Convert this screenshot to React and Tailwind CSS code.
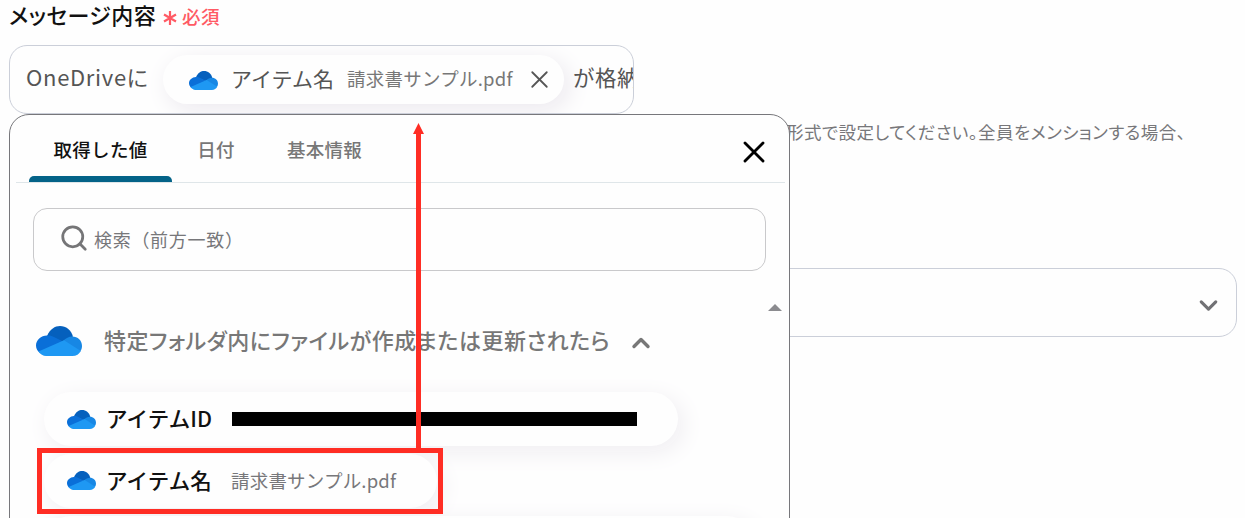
import React, { useState } from 'react';
import { ChevronDown, ChevronUp, Search, X } from 'lucide-react';

const tabs = [
  { id: 'values', label: '取得した値', className: 'ml-[13px] w-[143px]' },
  { id: 'date', label: '日付', className: 'w-[88px]' },
  { id: 'basic', label: '基本情報', className: 'w-[129px]' },
];

const OneDriveIcon = ({ className }) => (
  <svg viewBox="0 0 46 30" className={className}>
    <path d="M11 10C14 3 19 0 24 0c6 0 11 4 13 10.500L27 16z" fill="#0560bd" />
    <path d="M11 9.500c3-.3 5 .4 7 1.500L30 17 4 27C1.500 25 0 22.500 0 19.500 0 14 5 9.700 11 9.500z" fill="#0a6fd8" />
    <path d="M27 15c3-3 6-4.500 9-4.500 6 0 10 4 10 9.500 0 2-.6 4-1.800 5.500L23 17z" fill="#1787e4" />
    <path d="M2.500 25.500 28 14.200 44.800 25c-1.500 3-4.500 5-8.500 5H10c-3 0-5.500-1.700-7.500-4.500z" fill="#1e98f3" />
  </svg>
);

const Tabs = ({ active, onChange }) => (
  <div className="mr-1 ml-1.5 flex h-[68px] border-b border-[#dfe6e9]">
    {tabs.map((tab) => (
      <button
        key={tab.id}
        onClick={() => onChange(tab.id)}
        className={`flex flex-col items-center text-[18.500px] font-medium tracking-[0.3px] ${tab.className} ${
          active === tab.id ? 'text-[#111]' : 'text-[#777]'
        }`}
      >
        <span className="mt-5 h-7 leading-7 whitespace-nowrap">{tab.label}</span>
        {active === tab.id && <span className="mt-auto h-1.5 w-full rounded-t-[5px] bg-[#046388]" />}
      </button>
    ))}
    <button className="mt-[22px] mr-[16px] ml-auto h-[30px] w-[30px] text-black">
      <X className="h-full w-full scale-[1.2]" strokeWidth={1.900} />
    </button>
  </div>
);

const ValuePanel = () => {
  const [active, setActive] = useState('values');

  return (
    <div className="absolute top-[114px] left-[9px] h-[440px] w-[781px] rounded-t-[20px] border border-[#77777b] bg-[#fefefe]">
      <Tabs active={active} onChange={setActive} />

      {/* Search */}
      <div className="mx-[23px] mt-[25px] flex h-[63px] items-center rounded-[14px] border border-[#c9c9cb] pb-[2px] pl-[25px]">
        <Search className="-mt-px h-[30px] w-[30px] text-[#757577]" strokeWidth={2.200} />
        <span className="ml-[5px] text-lg tracking-[0.7px] text-[#77777a]">検索（前方一致）</span>
      </div>

      {/* Values of the trigger step */}
      <div className="flex">
        <div className="flex-1">
          <div className="mt-[50px] ml-[26px] flex h-10 items-center">
            <OneDriveIcon className="h-[30px] w-[46px]" />
            <span className="-mt-[3px] ml-[22px] text-[22px] font-medium tracking-[0.5px] whitespace-nowrap text-[#777] [font-feature-settings:'palt']">
              特定フォルダ内にファイルが作成または更新されたら
            </span>
            <ChevronUp className="mt-[3px] ml-[17px] h-[28px] w-[28px] text-[#777]" strokeWidth={2.900} />
          </div>

          <div className="mt-[31px] ml-[34px] flex h-[54px] w-[634px] items-center rounded-full bg-[#fefefe] pl-[23px] shadow-[5px_6px_24px_#efedf1]">
            <OneDriveIcon className="h-[19px] w-[29px]" />
            <span className="-mt-0.5 ml-[10px] w-[126px] text-[21.500px] font-medium tracking-[0.1px] whitespace-nowrap text-[#111]">アイテムID</span>
            <span className="h-[14px] w-[405px] bg-black" />
          </div>
          <div className="mt-2 ml-[34px] flex h-[54px] w-[393px] items-center rounded-full bg-[#fefefe] pb-0.5 pl-[23px] shadow-[5px_6px_24px_#efedf1]">
            <OneDriveIcon className="h-[19px] w-[29px]" />
            <span className="ml-[10px] w-[125px] text-[21.500px] font-medium tracking-[0.1px] whitespace-nowrap text-[#111]">アイテム名</span>
            <span className="mt-0.5 text-[18.500px] tracking-[0.2px] whitespace-nowrap text-[#77777a]">請求書サンプル.pdf</span>
          </div>
          <div className="mt-2 ml-[34px] h-[54px] w-[710px] rounded-full bg-[#fefefe] shadow-[5px_6px_24px_#efedf1]" />
        </div>
        <div className="mt-[33px] mr-[7px] flex w-[14px] flex-col items-center">
          <span className="h-0 w-0 border-x-[7px] border-b-[7px] border-x-transparent border-b-[#8b8b8f]" />
        </div>
      </div>
    </div>
  );
};

const App = () => {
  return (
    <div className="relative h-[518px] overflow-hidden bg-[#fefefe] font-['Noto_Sans_CJK_JP',sans-serif]">
      {/* Label */}
      <div className="flex h-[45px] items-start pl-[9px] whitespace-nowrap">
        <span className="h-8 w-[148px] text-[22px] leading-[28px] font-medium tracking-[0.4px] text-[#111] [font-feature-settings:'palt']">
          メッセージ内容
        </span>
        <svg viewBox="0 0 14 14" className="mt-[11px] ml-[6px] h-[14px] w-[14px] stroke-[#ff5a64]" strokeWidth="2.2">
          <path d="M7 0v14M1 3.500l12 7M13 3.500l-12 7" />
        </svg>
        <span className="mt-px ml-[5px] h-[30px] text-[18.500px] leading-[30px] font-medium tracking-[0.4px] text-[#ff5a64]">必須</span>
      </div>

      {/* Message field */}
      <div className="ml-[9px] flex h-[69px] w-[625px] items-center overflow-hidden rounded-[18px] border border-[#cbcfd9] whitespace-nowrap text-[#555]">
        <span className="-mt-1.5 ml-[16px] w-[137px] shrink-0 text-[22px] tracking-[0.7px] [font-feature-settings:'palt']">OneDriveに</span>
        <div className="flex h-[49px] w-[401px] shrink-0 items-center rounded-full bg-[#fefefe] pl-[26px] shadow-[5px_6px_24px_#ebe8ee]">
          <OneDriveIcon className="mt-px h-[19px] w-[29px] shrink-0" />
          <span className="-mt-0.5 ml-[13px] w-[116px] shrink-0 text-[21px]">アイテム名</span>
          <span className="-mt-0.5 w-[178px] shrink-0 text-[18.500px] tracking-[0.25px] text-[#777]">請求書サンプル.pdf</span>
          <X className="h-[29px] w-[29px] shrink-0" strokeWidth={1.500} />
        </div>
        <span className="-mt-1 ml-[9px] text-[21.500px] tracking-[0.5px]">が格納</span>
      </div>

      <p className="mt-[4px] ml-[786px] h-7 text-[17.500px] leading-7 tracking-[0.45px] whitespace-nowrap text-[#77777a] [font-feature-settings:'palt']">
        形式で設定してください。全員をメンションする場合、
      </p>

      {/* Select */}
      <div className="mt-[122px] ml-[9px] flex h-[69px] w-[1228px] items-center justify-end rounded-[18px] border border-[#cbcfd9] pr-[13px]">
        <ChevronDown className="mt-[6px] h-[29px] w-[29px] text-[#717174]" strokeWidth={2.600} />
      </div>

      <ValuePanel />

      {/* Callout */}
      <div className="absolute top-[448px] left-[37px] h-[66px] w-[406px] border-5 border-[#ff2d24]" />
      <svg viewBox="0 0 12 327" className="absolute top-[123px] left-[412px] h-[327px] w-3 fill-[#ff2d24]">
        <path d="M6.500 0 12 11H9v316H4V11H1z" />
      </svg>
    </div>
  );
};

export default App;
